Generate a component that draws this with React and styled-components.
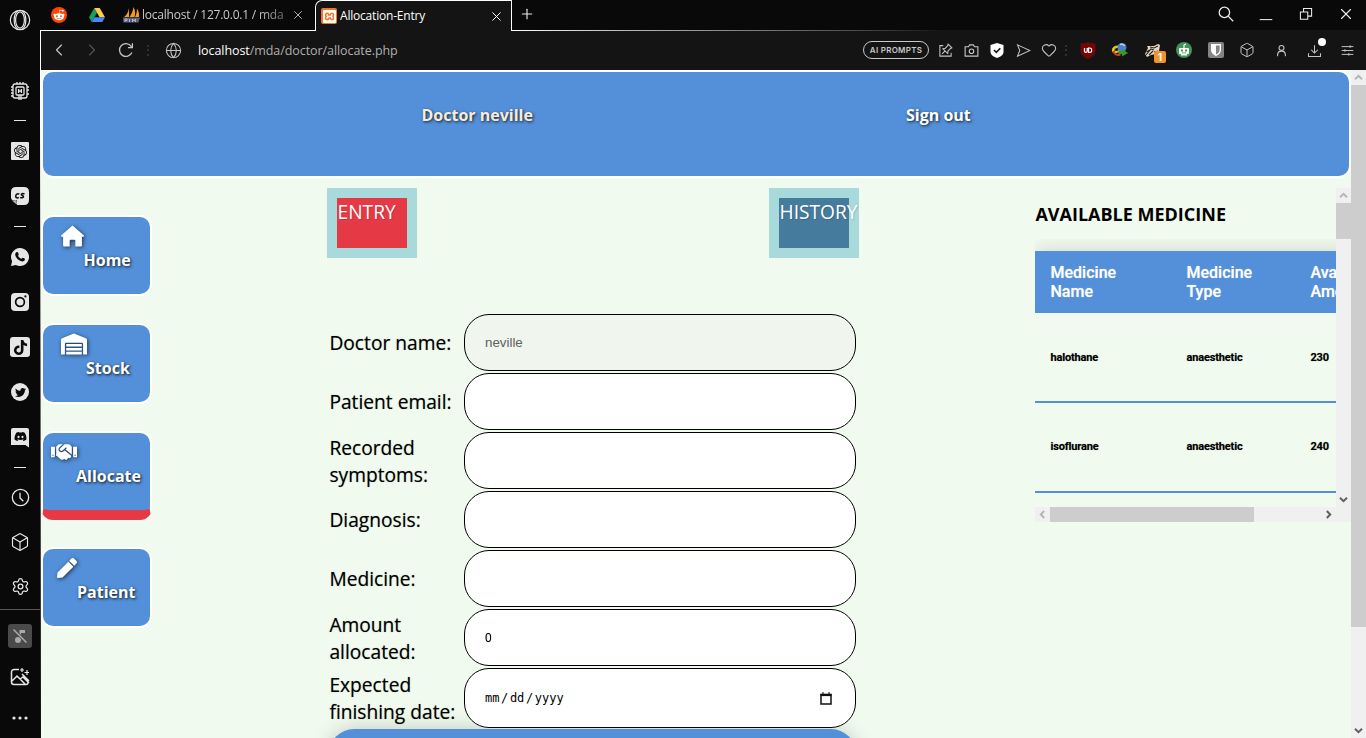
import React from 'react';
import styled, { createGlobalStyle } from 'styled-components';
import {
  Box, ChevronLeft, ChevronRight, Globe, Heart, Plus, Settings, X,
} from 'lucide-react';
import {
  FaWarehouse, FaHandshake, FaPen, FaTwitter, FaDiscord, FaTiktok, FaRedditAlien,
} from 'react-icons/fa';
import { SiOpenai, SiXampp } from 'react-icons/si';

const GlobalStyle = createGlobalStyle`
  * { box-sizing: border-box; }
  body { margin: 0; overflow: hidden; background: #0a0a0a; font-family: 'Open Sans', sans-serif; }
  svg { display: block; flex: none; }
`;

const Window = styled.div`
  display: flex;
  width: 1366px;
  height: 738px;
  overflow: hidden;
`;

/* ---------- Left rail ---------- */
const Rail = styled.aside`
  display: flex;
  flex-direction: column;
  width: 40px;
  background: #090909;
  color: #e6e6e6;
`;
const RailSlot = styled.div`
  display: flex;
  flex: none;
  align-items: center;
  justify-content: center;
  height: ${(p) => p.$h}px;
  margin-top: ${(p) => p.$mt || 0}px;
`;
const Dash = styled.i`
  width: 12px;
  height: 1px;
  background: #e6e6e6;
`;
const RailRule = styled.div`
  flex: none;
  height: 1px;
  background: #555;
`;
const RailTile = styled.span`
  display: flex;
  align-items: center;
  justify-content: center;
  width: ${(p) => p.$size || 18}px;
  height: ${(p) => p.$size || 18}px;
  border-radius: ${(p) => p.$r ?? 4}px;
  background: ${(p) => p.$bg || '#e6e6e6'};
  color: #0a0a0a;
`;
const DiscordTile = styled(RailTile)`
  height: 20px;
  padding-bottom: 2px;
  border-radius: 2px 2px 0 2px;
  clip-path: polygon(0 0, 100% 0, 100% 100%, 80% 88%, 0 88%);
`;
const Edge = styled.div`
  flex: none;
  width: 1px;
  margin-top: 30px;
  background: linear-gradient(#fff 0, #fff 90px, #8a808a 330px, #4a484a 520px, #111 700px);
`;

/* ---------- Browser chrome ---------- */
const Browser = styled.div`
  display: flex;
  flex: 1;
  flex-direction: column;
  min-width: 0;
`;
const TabBar = styled.div`
  display: flex;
  flex: none;
  height: 31px;
  background: #090909;
  color: #ececec;
`;
const Pinned = styled.div`
  display: flex;
  align-items: center;
  justify-content: center;
  width: ${(p) => p.$w}px;
  border-bottom: 1px solid #fff;
`;
const Tab = styled.div`
  display: flex;
  align-items: center;
  width: ${(p) => (p.$active ? 197 : 198)}px;
  padding-left: ${(p) => (p.$active ? 5 : 6)}px;
  padding-right: ${(p) => (p.$active ? 7 : 10)}px;
  color: ${(p) => (p.$active ? '#fff' : '#c9c9c9')};
  background: ${(p) => (p.$active ? '#141414' : 'transparent')};
  border: solid #fff;
  border-width: ${(p) => (p.$active ? '1px 1px 0 1px' : '0 0 1px')};
  border-radius: ${(p) => (p.$active ? '7px 1px 0 0' : '0')};
`;
const TabTitle = styled.span`
  flex: 1;
  margin-left: ${(p) => (p.$fade ? 2 : 3)}px;
  overflow: hidden;
  white-space: nowrap;
  font: 12px/18px 'Open Sans', sans-serif;
  letter-spacing: ${(p) => p.$ls}px;
  ${(p) => p.$fade && 'mask-image: linear-gradient(90deg, #000 115px, rgba(0,0,0,.5) 141px);'}
`;
const TabRest = styled.div`
  display: flex;
  flex: 1;
  align-items: center;
  justify-content: space-between;
  padding: 0 0 2px 7px;
  border-bottom: 1px solid;
  border-image: linear-gradient(90deg, #fff 0, #bbb 110px, #444 360px, #141414 430px) 1;
`;
const WindowButtons = styled.div`
  display: grid;
  grid-template-columns: repeat(4, 40px);
  justify-items: center;
  align-items: center;
  height: 28px;
`;
const Toolbar = styled.div`
  display: flex;
  flex: none;
  align-items: center;
  height: 39px;
  padding-bottom: 1px;
  background: #141414;
  color: #c4c4c4;
`;
const ToolSlot = styled.div`
  display: flex;
  position: relative;
  flex: none;
  align-items: center;
  justify-content: center;
  width: ${(p) => p.$w}px;
  height: 38px;
  opacity: ${(p) => (p.$dim ? 0.35 : 1)};
`;
const Dots = styled.span`
  width: 2px;
  height: 11px;
  background: repeating-linear-gradient(#303030 0 2px, transparent 2px 4.5px);
`;
const Url = styled.div`
  flex: 1;
  padding-left: 5px;
  color: #b0b0b0;
  font-size: 12.5px;
  letter-spacing: -0.07px;
  b { color: #fff; font-weight: 400; }
`;
const Pill = styled.div`
  width: 66px;
  height: 18px;
  margin-right: 6px;
  border: 1px solid #c8c8c8;
  border-radius: 9px;
  color: #c8c8c8;
  font: 600 8px/16px Inter, sans-serif;
  letter-spacing: 0.28px;
  text-align: center;
`;
const Count = styled.span`
  position: absolute;
  right: 2px;
  bottom: 6px;
  width: 12px;
  height: 12px;
  border-radius: 2px;
  background: #f0932b;
  color: #fff;
  font: 700 10px/12px Inter, sans-serif;
  text-align: center;
`;
const NewDot = styled.span`
  position: absolute;
  top: 7px;
  right: 2px;
  width: 8px;
  height: 8px;
  border-radius: 50%;
  background: #fff;
`;

/* ---------- Page ---------- */
const Viewport = styled.div`
  display: flex;
  flex: 1;
  min-height: 0;
  background: #f0faee;
`;
const Page = styled.div`
  width: 1310px;
  overflow: hidden;
`;
const Header = styled.header`
  display: flex;
  height: 108px;
  padding: 31px 0 0 378.5px;
  border: 2px solid #fff;
  border-radius: 12px;
  background: #5390d9;
`;
const HeaderLink = styled.a`
  flex: none;
  width: 484.5px;
  color: ${(p) => (p.$warm ? '#faebd7' : '#fff')};
  font-size: 16px;
  font-weight: 700;
  line-height: 24px;
  text-shadow: 1px 1px 3px rgba(0, 0, 0, 0.8);
`;
const Columns = styled.div`
  display: grid;
  grid-template-columns: 286px 708px 316px;
  height: 560px;
`;
const Nav = styled.nav`
  display: flex;
  flex-direction: column;
  gap: 27px;
  padding-top: 37px;
`;
const NavButton = styled.a`
  display: flex;
  flex-direction: column;
  width: 111px;
  height: ${(p) => (p.$active ? 89 : 81)}px;
  padding-top: 7px;
  border: 2px solid #fff;
  border-radius: 12px;
  border-bottom: ${(p) => (p.$active ? '10px solid #e63946' : '2px solid #fff')};
  background: #5390d9;
  color: #fff;
  svg {
    width: ${(p) => p.$iw}px;
    height: 24px;
    margin-left: ${(p) => p.$ix}px;
    filter: drop-shadow(1px 1px 2px rgba(0, 0, 0, 0.65));
  }
`;
const NavLabel = styled.span`
  margin-left: ${(p) => p.$x}px;
  font-size: 16px;
  font-weight: 700;
  line-height: 24px;
  text-shadow: 1px 1px 3px rgba(0, 0, 0, 0.9);
`;
const Center = styled.main`
  width: 532px;
  padding-top: 10px;
`;
const Switches = styled.div`
  display: flex;
  justify-content: space-between;
`;
const Switch = styled.a`
  width: 90px;
  height: 70px;
  border: 10px solid #a8dadc;
  background: ${(p) => (p.$on ? '#e63946' : '#457b9d')};
  color: #fff;
  font-size: 19.2px;
  line-height: 28px;
  text-indent: 0.5px;
  text-shadow: 1px 1px 1px rgba(0, 0, 0, 0.15);
  white-space: nowrap;
`;
const Form = styled.form`
  display: grid;
  grid-template-columns: 133px 392px;
  grid-template-rows: repeat(6, 57px) 60px;
  gap: 2px;
  margin: 56px 0 0 2px;
`;
const Label = styled.label`
  display: flex;
  align-items: center;
  width: 133px;
  padding-left: 0.4px;
  color: #000;
  font-size: 19.2px;
  line-height: 27px;
  text-shadow: 0 0 1px rgba(0, 0, 0, 0.4);
`;
const Field = styled.div`
  display: flex;
  align-items: center;
  justify-content: space-between;
  padding: 0 23px 0 20px;
  border: 1px solid #000;
  border-radius: 25px;
  background: ${(p) => (p.$disabled ? '#f0f6ee' : '#fff')};
  color: ${(p) => (p.$disabled ? '#606060' : '#000')};
  font: 13.33px 'Liberation Sans', sans-serif;
`;
const DateHint = styled.span`
  display: flex;
  gap: 1.6px;
  font: 12px 'DejaVu Sans Mono', monospace;
`;
const Amount = styled.span`
  padding-bottom: 2px;
  font: 13.33px 'Open Sans', sans-serif;
  text-shadow: 0 0 1px rgba(0, 0, 0, 0.5);
  transform: scaleX(0.88);
  transform-origin: 0 50%;
`;
const Submit = styled.div`
  width: 527px;
  height: 57px;
  margin: 1px 0 0 2px;
  border-radius: 25px;
  background: #5390d9;
  box-shadow: 0 0 20px rgba(0, 0, 0, 0.2);
`;

/* ---------- Medicine panel ---------- */
const Panel = styled.section`
  display: grid;
  grid-template-columns: 301px 15px;
  grid-template-rows: 319px 15px;
  height: 334px;
  margin-top: 10px;
`;
const PanelBody = styled.div`
  overflow: hidden;
`;
const PanelTitle = styled.h3`
  height: 63px;
  margin: 0;
  padding: 14px 0 0 0.4px;
  font-size: 18px;
  font-weight: 700;
  line-height: 25px;
  white-space: nowrap;
`;
const Table = styled.div`
  width: 420px;
  font-family: Roboto, sans-serif;
  box-shadow: 0 0 20px rgba(0, 0, 0, 0.15);
  clip-path: inset(-12px 0 0 0);
`;
const Row = styled.div`
  display: grid;
  grid-template-columns: 136px 124px 130px;
  align-items: center;
  height: ${(p) => p.$h}px;
  padding: 0 0 ${(p) => p.$pb || 0}px 15.4px;
  background: #f0faee;
  border-bottom: 2px solid #5390d9;
  font-size: 11px;
  font-weight: 700;
  letter-spacing: -0.14px;
  text-shadow: 0 0 1px rgba(0, 0, 0, 0.4);
`;
const HeadRow = styled(Row)`
  background: #5390d9;
  border: 0;
  color: #fff;
  font-size: 16px;
  font-weight: 500;
  line-height: 19px;
  letter-spacing: 0.03px;
  text-shadow: 0 0 1px rgba(255, 255, 255, 0.6);
`;
const Cell = styled.span`
  width: 75px;
`;

/* ---------- Scroll bars ---------- */
const Track = styled.div`
  display: flex;
  flex-direction: ${(p) => (p.$row ? 'row' : 'column')};
  justify-content: space-between;
  background: #f0f0f0;
`;
const Thumb = styled.div`
  flex: none;
  width: ${(p) => p.$w || 15}px;
  height: ${(p) => p.$h || 15}px;
  margin-bottom: ${(p) => (p.$row ? 0 : 'auto')};
  margin-right: ${(p) => (p.$row ? 'auto' : 0)};
  background: #cdcdcd;
`;
const Corner = styled.div`
  background: #f0f0f0;
`;

const Arrow = ({ turn = 0, color = '#606060' }) => (
  <svg width="15" height="15" viewBox="0 0 15 15" fill="none" stroke={color} strokeWidth="2">
    <path d="M4 9.2 7.5 5.8 11 9.2" transform={`rotate(${turn} 7.5 7.5)`} />
  </svg>
);

const Line = ({ size = 18, w = 1.3, children }) => (
  <svg width={size} height={size} viewBox="0 0 20 20" fill="none" stroke="currentColor" strokeWidth={w}>
    {children}
  </svg>
);

const OperaLogo = () => (
  <Line size={22} w={1.1}>
    <circle cx="10" cy="10" r="8.8" />
    <ellipse cx="10" cy="10" rx="4" ry="7.4" />
    <path d="M8 1.600C3.600 5 3.600 15 8 18.400M12 1.600C16.400 5 16.400 15 12 18.400" />
  </Line>
);
const Chip = () => (
  <Line size={20} w={1.3}>
    <rect x="3" y="3" width="14" height="14" rx="2" />
    <rect x="6" y="6" width="8" height="8" rx="1" />
    <path d="M8.6 8v4M11.4 8v4M8.6 10h2.8M7 1v2M10 1v2M13 1v2M1 6h2M1 9h2M1 12h2M1 15h2M17 6h2M17 9h2M17 13h2M9 14v5M11 14v5" />
  </Line>
);
const Instagram = () => (
  <svg width="18" height="18" viewBox="0 0 18 18">
    <rect width="18" height="18" rx="4" fill="#e6e6e6" />
    <circle cx="9" cy="9" r="4.4" fill="none" stroke="#0a0a0a" strokeWidth="1.7" />
    <circle cx="14.4" cy="3.4" r="1.1" fill="#0a0a0a" />
  </svg>
);
const Whatsapp = () => (
  <svg width="18" height="18" viewBox="0 0 18 18">
    <path fill="#e6e6e6" d="M9 0a9 9 0 1 1-4.1 17L0 18l1.1-4.7A9 9 0 0 1 9 0Z" />
    <path fill="#0a0a0a" d="M5.2 4.2 6.3 4c.4 0 .6.3.8.7l.7 1.7c.1.4-.7 1.1-.8 1.4.7 1.4 1.8 2.4 3.2 3 .4 0 1.1-1.2 1.5-1.1l1.8.9c.5.2.5.5.3 1.1-.3 1.2-1.5 1.8-2.6 1.7C7.7 12.9 4.4 9.5 4.2 6.5c0-.9.4-1.8 1-2.3Z" />
  </svg>
);
const SpeechTile = () => (
  <svg width="18" height="18" viewBox="0 0 18 18">
    <path fill="#e6e6e6" d="M5 0h8q5 0 5 5v8q0 5-5 5H6V13H1L0 11V5Q0 0 5 0Z" />
    <path fill="#b5b5b5" d="M1 13.5 5.5 13 6 17.5 5 17Z" />
    <path d="M8.3 7.2C6.5 5.8 4.7 7.5 4.7 9.2s1.8 2.2 3 1.2M13.5 7c-2-.9-3.400-.2-3.200.7s2.500.8 2.200 2-2.200 1.300-3.300.6" stroke="#0a0a0a" strokeWidth="1.5" fill="none" />
  </svg>
);
const ClockFace = () => (
  <Line size={19} w={1.4}><circle cx="10" cy="10" r="8.6" /><path d="M9.5 5v5.5l3.5 3.5" /></Line>
);
const NoMusic = () => (
  <svg width="16" height="16" viewBox="0 0 16 16" fill="#aaa">
    <circle cx="6" cy="12" r="3" />
    <path d="M7.5 12V2H13v3H9v7Z" />
    <path d="M1.5 1.5 14.5 14.5" stroke="#4a4a4a" strokeWidth="3" />
    <path d="M1.5 1.5 14.5 14.5" stroke="#aaa" strokeWidth="1.5" />
  </svg>
);
const MagicImage = () => (
  <Line size={20} w={1.5}>
    <path d="M9 2.5H4A2.5 2.5 0 0 0 1.5 5v10A2.5 2.5 0 0 0 4 17.5h12a2 2 0 0 0 2-2M2 14l5-5 8 8M10 12l3-2 6 6M12 7l7 7" />
    <path d="M12 1v4M10 3h4M17 3v5M14.5 5.5H19" strokeWidth="1.2" />
  </Line>
);
const HouseSolid = () => (
  <svg viewBox="0 0 22 22" fill="#fff">
    <path d="M11 1 22 10.5q.3 1-.8 1.2H20V20q0 1-1 1h-5.3v-5.5q0-.9-.9-.9H9.2q-.9 0-.9.9V21H3q-1 0-1-1v-8.3H.8Q-.3 11.5 0 10.5Z" />
  </svg>
);

const DriveLogo = () => (
  <svg width="16" height="14" viewBox="0 0 16 14">
    <path fill="#17a05d" d="M5.3 0 0 9.3 2.7 14 8 4.7Z" />
    <path fill="#ffcf48" d="M5.3 0h5.4L16 9.3h-5.4Z" />
    <path fill="#4688f4" d="M5.4 9.3H16L13.3 14H2.7Z" />
  </svg>
);
const Sails = () => (
  <svg width="17" height="16" viewBox="0 0 17 16">
    <path fill="#f59a23" d="M6 1v9H1C4 8 5.5 4 6 1ZM10.5 0c2 3 2 7 1 10H6.5c2-3 3.5-6 4-10ZM14 1.5c2 3 2.3 6 2 8.5h-4c1.2-2 2-5 2-8.5Z" />
    <path fill="#5b6186" d="M0 10.5h17L15.5 15.5H.5Z" />
    <path d="M2 15v-3h2v1.5H2M6.500 15v-3M9.500 15v-3l1.500 2 1.500-2v3" stroke="#c3c5d8" strokeWidth=".8" fill="none" />
  </svg>
);
const XamppTile = styled.span`
  display: flex;
  flex: none;
  align-items: center;
  justify-content: center;
  width: 16px;
  height: 16px;
  border-radius: 2px;
  background: #f37623;
  color: #fff;
`;
const RedditTile = styled(XamppTile)`
  border-radius: 50%;
  background: #ff4500;
`;

const SearchGlass = () => (
  <Line size={16} w={1.6}><circle cx="8" cy="8" r="6.5" /><path d="M12.7 12.7 19 19" /></Line>
);
const Reload = () => (
  <Line size={16} w={1.6}><path d="M17.3 13A8 8 0 1 1 16.5 5.5L17.8 7M18 1.5V7h-5.5" /></Line>
);
const PinNote = () => (
  <Line size={15} w={1.4}>
    <path d="M7 3.5H2.5v14h15V13M13.5 1.5l5 5-1.8.8-3.2 3.2-.6 3.5L6.5 7.6l3.3-.7L12.9 3.500ZM9.500 10.500 5.500 14.500" />
  </Line>
);
const CameraBox = () => (
  <Line size={15} w={1.5}>
    <path d="M1.5 5H6l1.5-2.5h5L14 5h4.5v12.5h-17Z" /><circle cx="10" cy="11" r="3" />
  </Line>
);
const ShieldCheck = () => (
  <svg width="14" height="15" viewBox="0 0 14 15">
    <path fill="#fff" d="M7 0 13.5 2v7c0 3-3.5 5-6.5 6-3-1-6.5-3-6.5-6V2Z" />
    <path d="M4 7l2.3 2.3L10.3 5.3" stroke="#141414" strokeWidth="1.6" fill="none" />
  </svg>
);
const SendArrow = () => (
  <Line size={15} w={1.4}><path d="M2 2.5 18.5 10 2 17.5 5 10Z" /></Line>
);
const UdShield = () => (
  <svg width="16" height="17" viewBox="0 0 16 17">
    <path fill="#800000" stroke="#5a1a1a" strokeWidth=".7" d="M8 .5c2 1 4 1.5 7 1.5v7c0 4-3.5 6-7 7.5C4.5 15 1 13 1 9V2c3 0 5-.5 7-1.5Z" />
    <path d="M4.5 6v3q0 1.3 1.3 1.3T7.2 9V6M8.5 6v4.3H10q1.7 0 1.7-2.1T10 6Z" stroke="#fff" strokeWidth="1.2" fill="none" />
  </svg>
);
const DownloadManager = () => (
  <svg width="18" height="16" viewBox="0 0 18 16">
    <path d="M8 5C3 4 1 8 3 10" stroke="#e8c31d" strokeWidth="2.5" fill="none" />
    <path d="M2.5 9c1 4 4 4.5 7 3.5" stroke="#d33a22" strokeWidth="2" fill="none" />
    <circle cx="11" cy="5.5" r="4.5" fill="#4b82c4" />
    <path d="M9 2.5c2-.8 4 .3 4.5 1.5" stroke="#b4cdea" strokeWidth="1.6" fill="none" />
    <path d="M4 9.5c2 1 3 .5 4-1" stroke="#e8c31d" strokeWidth="2" fill="none" />
    <path fill="#2f9d27" d="M6 9.5h5V7l6 4-6 3.5V12H8Z" />
  </svg>
);
const Raccoon = () => (
  <svg width="17" height="15" viewBox="0 0 17 15">
    <path fill="#e7d4c4" d="M1 11 4 5 3 3l4 0 3 0 4-2 2 1-1 6-3 3-5 1-4 2Z" />
    <path d="M2 12 7 6l3 1M6 4l4 1 4-2M5 12l4-4M2.5 9l3-2M10 9l4-1" stroke="#292523" strokeWidth="1.1" fill="none" />
  </svg>
);
const Robot = () => (
  <svg width="16" height="16" viewBox="0 0 16 16">
    <circle cx="8" cy="8" r="8" fill="#3f9457" />
    <path fill="#fff" d="M4 6h8q1 0 1 1v4q0 1-1 1H4q-1 0-1-1V7q0-1 1-1ZM5 12h6v1.5H5Z" />
    <path d="M8 6V3l2-1" stroke="#fff" strokeWidth="1.2" fill="none" />
    <path fill="#3f9457" d="M5 7.5h2v2H5ZM9 7.5h2v2H9ZM6 10.5h4v.8H6Z" />
  </svg>
);
const Vault = () => (
  <svg width="16" height="16" viewBox="0 0 16 16">
    <rect width="16" height="16" rx="2" fill="#858585" />
    <path fill="#fff" d="M3 2h10v6c0 3-2.5 4.8-5 6-2.5-1.2-5-3-5-6Z" />
    <path fill="#858585" d="M8 3.5h3.6V8c0 2-1.6 3.5-3.6 4.5Z" />
  </svg>
);
const Person = () => (
  <Line size={13} w={1.7}><circle cx="10" cy="6" r="3.8" /><path d="M4 19v-2c0-3.5 2.5-6 6-6s6 2.5 6 6v2" /></Line>
);
const Download = () => (
  <Line size={15} w={1.4}><path d="M10 3v10M5.5 9l4.5 4.5L14.5 9M2 13.5V18h16v-4.500" /></Line>
);
const Sliders = () => (
  <Line size={13} w={1.5}><path d="M1 4h18M1 10h18M1 16h18M14 2v4M6 8v4M12 14v4" /></Line>
);
const Restore = () => (
  <Line size={14} w={1.5}><path d="M2 7h10.5v10.5H2ZM6.5 7V2H18v11h-5.5" /></Line>
);
const Minimize = () => (
  <Line size={14} w={1.5}><path d="M1 18h18" /></Line>
);
const Calendar = () => (
  <svg width="12" height="13" viewBox="0 0 12 13" fill="none" stroke="#111">
    <path d="M1 2.500h10v9.500H1Z" strokeWidth="1.5" />
    <path d="M.5 3h11" strokeWidth="2.2" />
    <path d="M3 0v2M9 0v2" />
  </svg>
);

const rail = [
  [40, <OperaLogo />], [42, <Chip />, 30], [16, <Dash />],
  [46, <RailTile $r={1}><SiOpenai size={13} /></RailTile>],
  [44, <SpeechTile />],
  [16, <Dash />],
  [46, <Whatsapp />], [44, <Instagram />],
  [46, <RailTile $size={20} $r={3}><FaTiktok size={15} /></RailTile>],
  [44, <RailTile $r={9}><FaTwitter size={11} /></RailTile>],
  [47, <DiscordTile><FaDiscord size={13} /></DiscordTile>],
  [13, <Dash />],
  [46, <ClockFace />],
  [44, <Box size={20} strokeWidth={1.4} />],
  [45, <Settings size={19} strokeWidth={1.6} />],
];

const tools = [
  [20, <PinNote />], [32, <CameraBox />], [20, <ShieldCheck />],
  [32, <SendArrow />], [20, <Heart size={16} strokeWidth={1.6} />], [14, <Dots />],
  [30, <UdShield />], [34, <DownloadManager />], [31, <><Raccoon /><Count>1</Count></>],
  [32, <Robot />], [32, <Vault />], [30, <Box size={16} strokeWidth={1.5} />],
  [38, <Person />], [28, <><Download /><NewDot /></>], [38, <Sliders />],
];

const navItems = [
  { name: 'Home', icon: <HouseSolid />, ix: 18, iw: 23, lx: 40.5 },
  { name: 'Stock', icon: <FaWarehouse />, ix: 18, iw: 26, lx: 43 },
  { name: 'Allocate', icon: <FaHandshake />, ix: 8, iw: 26, lx: 33, active: true },
  { name: 'Patient', icon: <FaPen />, ix: 14, iw: 20, lx: 34 },
];

const medicines = [
  { name: 'halothane', type: 'anaesthetic', amount: 230 },
  { name: 'isoflurane', type: 'anaesthetic', amount: 240, pb: 2 },
];

const dateParts = ['mm', '/', 'dd', '/', 'yyyy'];

export default function App() {
  return (
    <Window>
      <GlobalStyle />
      <Rail>
        {rail.map(([h, icon, mt], i) => <RailSlot key={i} $h={h} $mt={mt}>{icon}</RailSlot>)}
        <RailRule />
        <RailSlot $h={52}><RailTile $size={24} $r={3} $bg="#4a4a4a"><NoMusic /></RailTile></RailSlot>
        <RailSlot $h={30}><MagicImage /></RailSlot>
        <RailSlot $h={40} $mt={6}>
          <svg width="16" height="4" viewBox="0 0 16 4" fill="currentColor">
            <circle cx="2" cy="2" r="1.6" /><circle cx="8" cy="2" r="1.6" /><circle cx="14" cy="2" r="1.6" />
          </svg>
        </RailSlot>
      </Rail>
      <Edge />
      <Browser>
        <TabBar>
          <Pinned $w={36}><RedditTile><FaRedditAlien size={12} /></RedditTile></Pinned>
          <Pinned $w={40}><DriveLogo /></Pinned>
          <Tab>
            <Sails />
            <TabTitle $fade $ls={-0.22}>localhost / 127.0.0.1 / mda</TabTitle>
            <X size={14} strokeWidth={1.5} />
          </Tab>
          <Tab $active>
            <XamppTile><SiXampp size={13} /></XamppTile>
            <TabTitle $ls={-0.2}>Allocation-Entry</TabTitle>
            <X size={15} strokeWidth={1.6} />
          </Tab>
          <TabRest>
            <Plus size={16} strokeWidth={1.7} />
            <WindowButtons>
              <SearchGlass />
              <Minimize />
              <Restore />
              <X size={18} strokeWidth={1.5} />
            </WindowButtons>
          </TabRest>
        </TabBar>
        <Toolbar>
          <ToolSlot $w={35}><ChevronLeft size={20} strokeWidth={1.4} /></ToolSlot>
          <ToolSlot $w={32} $dim><ChevronRight size={20} strokeWidth={1.4} /></ToolSlot>
          <ToolSlot $w={35}><Reload /></ToolSlot>
          <ToolSlot $w={10}><Dots /></ToolSlot>
          <ToolSlot $w={40}><Globe size={17} strokeWidth={1.5} /></ToolSlot>
          <Url><b>localhost</b>/mda/doctor/allocate.php</Url>
          <Pill>AI PROMPTS</Pill>
          {tools.map(([w, icon], i) => <ToolSlot key={i} $w={w}>{icon}</ToolSlot>)}
        </Toolbar>
        <Viewport>
          <Page>
            <Header>
              <HeaderLink $warm>Doctor neville</HeaderLink>
              <HeaderLink>Sign out</HeaderLink>
            </Header>
            <Columns>
              <Nav>
                {navItems.map((n) => (
                  <NavButton key={n.name} $active={n.active} $ix={n.ix} $iw={n.iw}>
                    {n.icon}
                    <NavLabel $x={n.lx}>{n.name}</NavLabel>
                  </NavButton>
                ))}
              </Nav>
              <Center>
                <Switches>
                  <Switch $on>ENTRY</Switch>
                  <Switch>HISTORY</Switch>
                </Switches>
                <Form>
                  <Label>Doctor name:</Label><Field $disabled>neville</Field>
                  <Label>Patient email:</Label><Field />
                  <Label>Recorded symptoms:</Label><Field />
                  <Label>Diagnosis:</Label><Field />
                  <Label>Medicine:</Label><Field />
                  <Label>Amount allocated:</Label><Field><Amount>0</Amount></Field>
                  <Label>Expected finishing date:</Label>
                  <Field>
                    <DateHint>{dateParts.map((part, i) => <span key={i}>{part}</span>)}</DateHint>
                    <Calendar />
                  </Field>
                </Form>
                <Submit />
              </Center>
              <Panel>
                <PanelBody>
                  <PanelTitle>AVAILABLE MEDICINE</PanelTitle>
                  <Table>
                    <HeadRow $h={62}><Cell>Medicine Name</Cell><Cell>Medicine Type</Cell><Cell>Available Amount</Cell></HeadRow>
                    {medicines.map((m) => (
                      <Row key={m.name} $h={90} $pb={m.pb}><Cell>{m.name}</Cell><Cell>{m.type}</Cell><Cell>{m.amount}</Cell></Row>
                    ))}
                  </Table>
                </PanelBody>
                <Track><Arrow color="#b5b5b5" /><Thumb $h={36} /><Arrow turn={180} /></Track>
                <Track $row><Arrow turn={-90} color="#b5b5b5" /><Thumb $row $w={204} /><Arrow turn={90} /></Track>
                <Corner />
              </Panel>
            </Columns>
          </Page>
          <Track><Arrow color="#b5b5b5" /><Thumb $h={542} /><Arrow turn={180} /></Track>
        </Viewport>
      </Browser>
    </Window>
  );
}
